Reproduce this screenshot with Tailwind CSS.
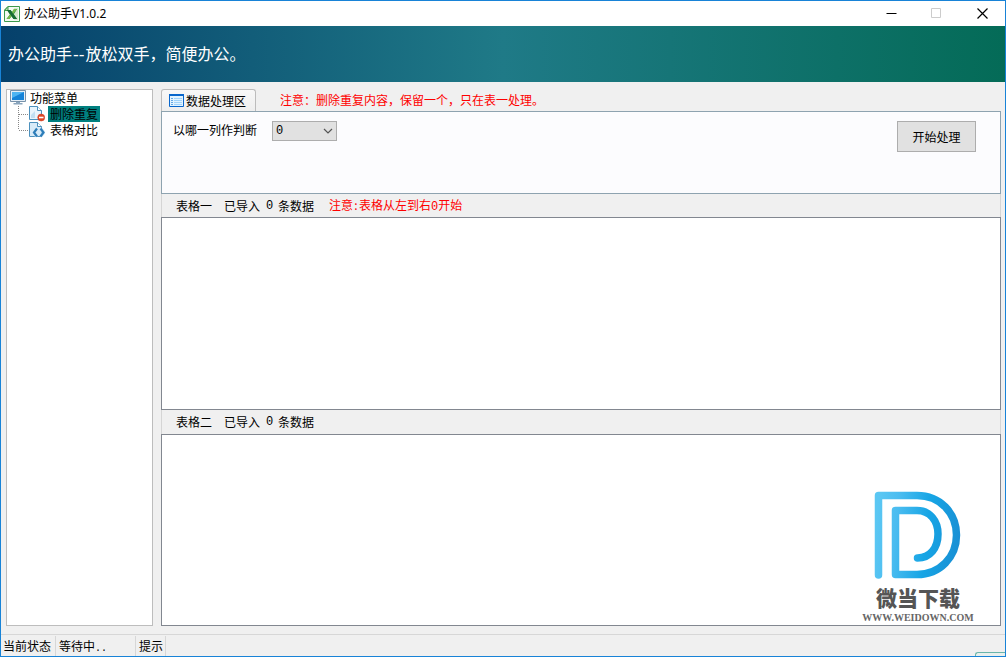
<!DOCTYPE html>
<html lang="zh-CN">
<head>
<meta charset="utf-8">
<meta name="viewport" content="width=device-width, initial-scale=1">
<title>办公助手V1.0.2</title>
<script src="https://cdn.jsdelivr.net/npm/@tailwindcss/browser@4"></script>
</head>
<body class="relative flex h-screen flex-col overflow-hidden border border-[#1883d7] bg-[#f0f0f0] font-['Noto_Sans_CJK_SC',sans-serif] text-xs leading-4 text-black">

<header class="flex h-[25px] shrink-0 items-center bg-white pl-[3px]">
  <svg class="size-4" viewBox="0 0 16 16" aria-hidden="true">
    <path d="M4 .5H15.5V15.5H.5V4Z" fill="#f4faf2" stroke="#3d9a4c"/>
    <path d="M.5 4.500H4V.5Z" fill="#b5dcae" stroke="#3d9a4c"/>
    <path d="M10 2H14V14H10Z" fill="#d5e9cf"/>
    <path d="M3 4H6.500L8.500 6.500L10 3H13L9.800 8.200L13 13H9.500L7.500 10L5.500 13H2.500L6 8.500Z" fill="#23863a"/>
    <path d="M10 3H13L5.500 13H2.500Z" fill="#75bb4c"/>
    <path d="M3 4H6.500L13 13H9.500Z" fill="#176d35"/>
  </svg>
  <h1 class="ml-1 flex-1">办公助手<span class="font-['Noto_Sans']">V1.0.2</span></h1>
  <div class="flex">
    <button type="button" aria-label="最小化" class="flex h-6 w-[46px] items-center justify-center"><svg class="h-[11px] w-[11px]" viewBox="0 0 11 11"><path d="M.5 5.500H10.500" stroke="#000"/></svg></button>
    <button type="button" aria-label="最大化" disabled class="flex h-6 w-[45px] items-center justify-center"><svg class="h-[11px] w-[11px]" viewBox="0 0 11 11"><path d="M.5 .5H9.500V9.500H.5Z" fill="none" stroke="#ccc"/></svg></button>
    <button type="button" aria-label="关闭" class="flex h-6 w-[46px] items-center justify-center"><svg class="h-[11px] w-[11px]" viewBox="0 0 11 11"><path d="M.5 .5L10.500 10.500M10.500 .5L.5 10.500" stroke="#000" stroke-width="1.200"/></svg></button>
  </div>
</header>

<div class="flex h-14 shrink-0 items-center bg-linear-to-r/srgb from-[#05406b] via-[#1f7a87] to-[#046b57] pl-[7px]">
  <p class="text-base leading-6 text-white">办公助手<span class="px-px font-['DejaVu_Sans']">--</span>放松双手，简便办公。</p>
</div>

<div class="flex min-h-0 flex-1 gap-2 pt-[7px] pr-1 pb-2 pl-[5px]">
  <nav aria-label="功能菜单" class="w-[147px] shrink-0 border border-[#bdbdbd] bg-white pl-[3px]">
    <div class="flex h-4 items-center gap-1">
      <svg class="size-4" viewBox="0 0 16 16" aria-hidden="true">
        <path d="M.5 .5H15.500V11.500H.5Z" fill="#e6eff7" stroke="#7892aa"/>
        <path d="M2 2H14V10H2Z" fill="#1683d8"/><path d="M2 2H14L2 8Z" fill="#4eb4f2"/>
        <path d="M6 12H10V13H12.500V14.500H3.500V13H6Z" fill="#8aa5bd"/>
      </svg>
      <span>功能菜单</span>
    </div>
    <ul>
      <li class="flex h-4 items-center">
        <svg class="h-4 w-[19px]" viewBox="0 0 19 16" aria-hidden="true"><path d="M8.500 0V16M9 8.500H19" fill="none" stroke="#888" stroke-dasharray="1 1"/></svg>
        <button type="button" class="flex h-4 items-center">
          <svg class="mr-[3px] size-4" viewBox="0 0 16 16" aria-hidden="true">
            <path d="M.5 .5H8.500L12.500 4.500V13.500H.5Z" fill="#e8f4fc" stroke="#4d91bd"/>
            <path d="M8.500 .5V4.500H12.500" fill="#fff" stroke="#4d91bd"/><path d="M2 9L6 5V12H2Z" fill="#c1dff2"/>
            <circle cx="12.200" cy="11.500" r="3.500" fill="#e04726" stroke="#c93419" stroke-width=".5"/><path d="M10 11.500H14.500" stroke="#fff" stroke-width="1.600"/>
          </svg>
          <span class="h-4 bg-[#008080] px-[2px]">删除重复</span>
        </button>
      </li>
      <li class="flex h-4 items-center">
        <svg class="h-4 w-[19px]" viewBox="0 0 19 16" aria-hidden="true"><path d="M8.500 0V8M9 8.500H19" fill="none" stroke="#888" stroke-dasharray="1 1"/></svg>
        <button type="button" class="flex h-4 items-center">
          <svg class="mr-[3px] size-4" viewBox="0 0 16 16" aria-hidden="true">
            <path d="M.5 .5H8.500L12.500 4.500V14.500H.5Z" fill="#d8ebf8" stroke="#4d91bd"/>
            <path d="M8.500 .5V4.500H12.500" fill="#fff" stroke="#4d91bd"/>
            <path d="M8 6.500L5 10.500L8 14.500M11.500 6.500L14.500 10.500L11.500 14.500" fill="none" stroke="#d8ebf8" stroke-width="3.500"/>
            <path d="M8 6.500L5 10.500L8 14.500M11.500 6.500L14.500 10.500L11.500 14.500" fill="none" stroke="#2d7db9" stroke-width="2.200"/>
          </svg>
          <span class="px-[2px]">表格对比</span>
        </button>
      </li>
    </ul>
  </nav>

  <main class="flex min-w-0 flex-1 flex-col">
    <div class="flex h-[22px] shrink-0 items-center">
      <button type="button" class="flex h-[22px] w-[95px] items-center gap-[2px] rounded-t-[3px] border border-b-0 border-[#bcbcbc] bg-linear-to-b from-[#f8f8f8] to-[#eeeeee] pl-[7px]">
        <svg class="h-[13px] w-[15px]" viewBox="0 0 15 13" aria-hidden="true">
          <path d="M.5 .5H14.500V12.500H.5Z" fill="#e1f3ff" stroke="#0866cc"/><path d="M0 0H15V2H0Z" fill="#0866cc"/>
          <path d="M2 4.500H4M2 6.500H4M2 8.500H4M2 10.500H4" stroke="#64a8e5"/><path d="M5 4.500H13M5 6.500H13M5 8.500H13M5 10.500H13" stroke="#a0d3fa"/>
        </svg>
        <span>数据处理区</span>
      </button>
      <p class="pl-6 text-[#ff0000]">注意：删除重复内容，保留一个，只在表一处理。</p>
    </div>
    <section aria-label="数据处理区" class="flex h-[83px] shrink-0 items-start justify-between border border-[#8ea3b0] bg-[#fcfcfe] pt-[9px] pr-6 pl-[11px]">
      <div class="flex items-start">
        <label for="column" class="w-[99px] leading-[18px]">以哪一列作判断</label>
        <div class="relative">
          <select id="column" class="block h-5 w-[65px] appearance-none border border-[#adadad] bg-[#e1e1e1] pl-[3px] font-['Liberation_Mono'] text-xs leading-[18px]">
            <option>0</option>
          </select>
          <svg class="pointer-events-none absolute top-[7px] right-1 h-[6px] w-[10px]" viewBox="0 0 10 6" aria-hidden="true"><path d="M1 1L5 5L9 1" fill="none" stroke="#555" stroke-width="1.200"/></svg>
        </div>
      </div>
      <button type="button" class="h-[31px] w-[79px] border border-[#adadad] bg-[#e1e1e1]">开始处理</button>
    </section>
    <h2 class="flex h-[23px] shrink-0 items-center border-x border-[#d5d5d5] pl-[14px]">
      <span class="w-12">表格一</span><span class="w-[42px]">已导入</span><span class="w-3 font-['Liberation_Mono']">0</span><span class="w-[51px]">条数据</span>
      <span class="text-[#ff0000]">注意<span class="inline-block w-[6px] text-center">:</span>表格从左到右<span class="font-['Liberation_Mono']">0</span>开始</span>
    </h2>
    <section aria-label="表格一" class="min-h-0 flex-1 border border-[#828790] bg-white"></section>
    <h2 class="flex h-6 shrink-0 items-center border-x border-[#d5d5d5] pl-[14px]">
      <span class="w-12">表格二</span><span class="w-[42px]">已导入</span><span class="w-3 font-['Liberation_Mono']">0</span><span>条数据</span>
    </h2>
    <section aria-label="表格二" class="flex min-h-0 flex-1 items-end justify-end border border-[#828790] bg-white pr-[26px]">
      <div class="flex w-[112px] flex-col items-center text-[#555]">
        <svg class="mb-[2px] h-[90px] w-[90px]" viewBox="0 3 90 90" aria-hidden="true">
          <defs><linearGradient id="logo-blue" gradientUnits="userSpaceOnUse" x1="2" y1="40" x2="88" y2="50"><stop stop-color="#5bc7f3"/><stop offset=".24" stop-color="#4abcf0"/><stop offset=".6" stop-color="#16a5e5"/><stop offset="1" stop-color="#198fd4"/></linearGradient></defs>
          <path d="M5.500 87V7.500H44C67 7.500 83.500 25 83.500 47C83.500 69 67 86.500 44 86.500H22.500V22.500H44C57 22.500 65 33 65 46C65 60 57 70 44.500 70" fill="none" stroke="url(#logo-blue)" stroke-width="7.500" stroke-linecap="round" stroke-linejoin="round"/>
        </svg>
        <strong class="text-[21px] leading-7 font-black">微当下载</strong>
        <span class="font-['Liberation_Serif'] text-[10px] leading-[14px] font-bold text-[#666]">WWW.WEIDOWN.COM</span>
      </div>
    </section>
  </main>
</div>

<footer class="flex h-[22px] shrink-0 items-center border-t border-[#d7d7d7]">
  <span class="h-5 w-[55px] border-r border-[#d7d7d7] pt-[2px] pl-[2px]">当前状态</span>
  <span class="h-5 w-20 border-r border-[#d7d7d7] pt-[2px] pl-[3px]">等待中<span class="font-['Liberation_Mono'] text-[10px]">..</span></span>
  <span class="h-5 w-[30px] border-r border-[#d7d7d7] pt-[2px] pl-[3px]">提示</span>
</footer>
<div class="absolute -right-px -bottom-px h-[5px] w-[31px] rounded-tl-[3px] border-t border-l border-[#6ab5aa] bg-[#e8f0ed]"></div>
</body>
</html>
